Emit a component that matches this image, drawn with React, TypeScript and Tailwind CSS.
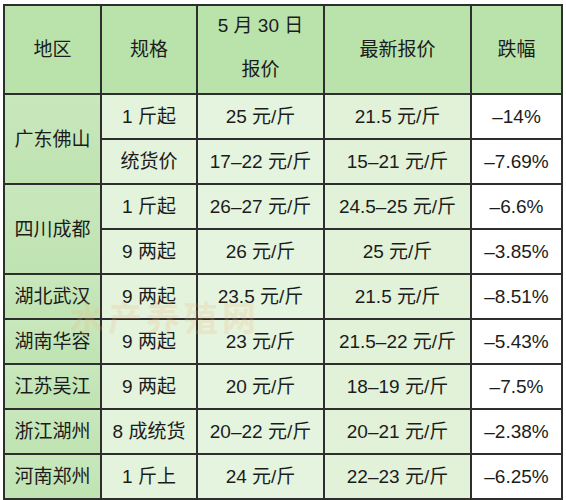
import React from "react"

type Row = { region?: string; span?: number; spec: string; old: string; latest: string; drop: string }

const rows: Row[] = [
  { region: "广东佛山", span: 2, spec: "1 斤起", old: "25 元/斤", latest: "21.5 元/斤", drop: "–14%" },
  { spec: "统货价", old: "17–22 元/斤", latest: "15–21 元/斤", drop: "–7.69%" },
  { region: "四川成都", span: 2, spec: "1 斤起", old: "26–27 元/斤", latest: "24.5–25 元/斤", drop: "–6.6%" },
  { spec: "9 两起", old: "26 元/斤", latest: "25 元/斤", drop: "–3.85%" },
  { region: "湖北武汉", spec: "9 两起", old: "23.5 元/斤", latest: "21.5 元/斤", drop: "–8.51%" },
  { region: "湖南华容", spec: "9 两起", old: "23 元/斤", latest: "21.5–22 元/斤", drop: "–5.43%" },
  { region: "江苏吴江", spec: "9 两起", old: "20 元/斤", latest: "18–19 元/斤", drop: "–7.5%" },
  { region: "浙江湖州", spec: "8 成统货", old: "20–22 元/斤", latest: "20–21 元/斤", drop: "–2.38%" },
  { region: "河南郑州", spec: "1 斤上", old: "24 元/斤", latest: "22–23 元/斤", drop: "–6.25%" },
]

const cell = "border-2 border-[#2e2e2e] text-center align-middle p-0 whitespace-nowrap"

export default function App() {
  return (
    <div
      className="relative w-[566px] h-[500px] bg-white text-[#1c1c1c] text-[19px] leading-none"
      style={{ fontFamily: '"Liberation Sans", "Noto Sans CJK SC", sans-serif' }}
    >
      <div className="pl-[3px] pt-[4px]">
        <table className="border-collapse table-fixed w-[558px]">
          <colgroup>
            <col className="w-[97px]" />
            <col className="w-[96px]" />
            <col className="w-[127px]" />
            <col className="w-[147px]" />
            <col className="w-[91px]" />
          </colgroup>
          <thead>
            <tr className="h-[89px] bg-[#bae2ab]">
              <th className={`${cell} font-normal`}>地区</th>
              <th className={`${cell} font-normal`}>规格</th>
              <th className={`${cell} font-normal`}>
                <div className="flex flex-col items-center gap-[25px] -mt-[4px]">
                  <span>5 月 30 日</span>
                  <span>报价</span>
                </div>
              </th>
              <th className={`${cell} font-normal`}>最新报价</th>
              <th className={`${cell} font-normal`}>跌幅</th>
            </tr>
          </thead>
          <tbody>
            {rows.map((r, i) => (
              <tr key={i} className="h-[45px]">
                {r.region && (
                  <td
                    rowSpan={r.span ?? 1}
                    className={`${cell} bg-gradient-to-b from-[#c9e8bd] to-[#bfe3b1]`}
                  >
                    {r.region}
                  </td>
                )}
                <td className={`${cell} bg-[#e3f3dc]`}>{r.spec}</td>
                <td className={`${cell} bg-[#e5f4de]`}>{r.old}</td>
                <td className={`${cell} bg-[#e1f2d9]`}>{r.latest}</td>
                <td className={`${cell} bg-white`}>{r.drop}</td>
              </tr>
            ))}
          </tbody>
        </table>
      </div>
      <div
        className="absolute left-[70px] top-[300px] text-[34px] font-bold tracking-[4px] text-[#f5b07a] opacity-20 pointer-events-none"
        style={{ fontFamily: '"Noto Sans CJK SC", sans-serif' }}
      >
        水产养殖网
      </div>
    </div>
  )
}
